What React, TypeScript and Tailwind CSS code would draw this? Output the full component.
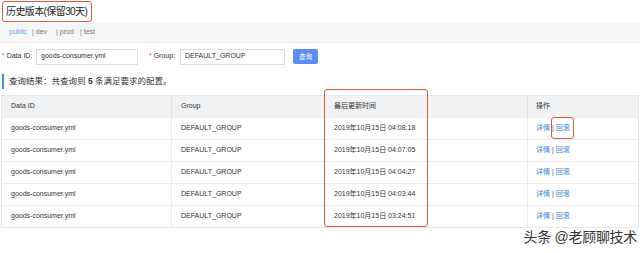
import React from "react";

const rows = [
  "2019年10月15日 04:08:18",
  "2019年10月15日 04:07:05",
  "2019年10月15日 04:04:27",
  "2019年10月15日 04:03:44",
  "2019年10月15日 03:24:51",
];

export default function App() {
  return (
    <div
      className="relative w-[640px] h-[253px] bg-white overflow-hidden text-[#333]"
      style={{ fontFamily: '"Liberation Sans", "Noto Sans CJK SC", sans-serif' }}
    >
      {/* title */}
      <div className="h-[23px] pt-[1px] pl-[2px]">
        <div className="w-[90px] h-[21px] border border-[#e2583a] rounded-[3px] flex items-center pl-[3px] text-[10px] text-[#222] whitespace-nowrap tracking-[-0.6px]">
          历史版本(保留30天)
        </div>
      </div>
      {/* tabs */}
      <div className="h-[20px] bg-[#f6f6f6] flex items-center text-[7px] text-[#777] border-b border-[#ececec]">
        <span className="ml-[9px] w-[23px] text-[#5fa8e6]">public</span>
        <span className="w-[24px]">| dev</span>
        <span className="w-[24px]">| prod</span>
        <span>| test</span>
      </div>
      {/* form */}
      <div className="mt-[5px] h-[17px] flex items-center text-[7px]">
        <span className="ml-[2px] w-[34px]">
          <span className="text-[#e2583a]">* </span>Data ID:
        </span>
        <div className="w-[102px] h-[16px] border border-[#dcdcdc] flex items-center pl-[4px] text-[#333]">
          goods-consumer.yml
        </div>
        <span className="ml-[11px] w-[31px]">
          <span className="text-[#e2583a]">* </span>Group:
        </span>
        <div className="w-[105px] h-[16px] border border-[#dcdcdc] flex items-center pl-[4px] text-[#333]">
          DEFAULT_GROUP
        </div>
        <div className="ml-[8px] w-[25px] h-[15px] rounded-[2px] bg-[#5b8ef0] text-white flex items-center justify-center text-[6.5px]">
          查询
        </div>
      </div>
      {/* info */}
      <div className="mt-[9px] h-[15px] flex items-center">
        <div className="ml-[2px] w-[2px] h-[15px] bg-[#3d8fde]" />
        <span className="ml-[5px] text-[8.5px] text-[#333]">
          查询结果：共查询到 <b className="font-bold">5</b> 条满足要求的配置。
        </span>
      </div>
      {/* table */}
      <div className="mt-[6px] ml-[1px] w-[638px] border border-[#e8e8e8] text-[7px]">
        <div className="grid grid-cols-[170px_153px_203px_1fr] h-[21px] bg-[#f1f2f4] items-center">
          <div className="pl-[9px] h-full flex items-center border-r border-[#e4e4e4]">Data ID</div>
          <div className="pl-[9px] h-full flex items-center border-r border-[#e4e4e4]">Group</div>
          <div className="pl-[9px] h-full flex items-center border-r border-[#e4e4e4]">最后更新时间</div>
          <div className="pl-[8px] h-full flex items-center">操作</div>
        </div>
        {rows.map((t, i) => (
          <div
            key={i}
            className="grid grid-cols-[170px_153px_203px_1fr] h-[22px] items-center border-t border-[#ececec]"
          >
            <div className="pl-[9px] h-full flex items-center border-r border-[#ececec]">goods-consumer.yml</div>
            <div className="pl-[9px] h-full flex items-center border-r border-[#ececec]">DEFAULT_GROUP</div>
            <div className="pl-[9px] h-full flex items-center border-r border-[#ececec]">{t}</div>
            <div className="pl-[8px] h-full flex items-center text-[#3b82d6]">
              详情<span className="mx-[2px] text-[#555]">|</span>回滚
            </div>
          </div>
        ))}
      </div>
      {/* highlight boxes */}
      <div className="absolute left-[324px] top-[89px] w-[104px] h-[138px] border-[1.5px] border-[#e2583a] rounded-[3px]" />
      <div className="absolute left-[551px] top-[117px] w-[23px] h-[22px] border-[1.5px] border-[#e2583a] rounded-[3px]" />
      {/* watermark */}
      <div
        className="absolute right-[3px] top-[227px] text-[14px] text-[#333] whitespace-nowrap tracking-[-0.3px]"
        style={{ textShadow: "0 0 2px #fff, 0 0 2px #fff" }}
      >
        头条 @老顾聊技术
      </div>
    </div>
  );
}
